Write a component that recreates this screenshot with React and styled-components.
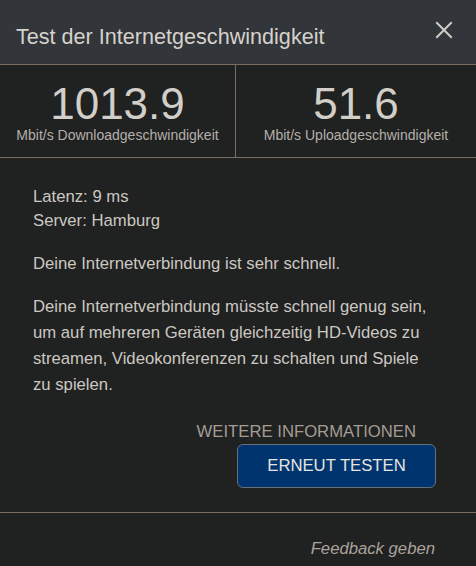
import React from 'react';
import styled, { createGlobalStyle } from 'styled-components';

const GlobalStyle = createGlobalStyle`
  html, body {
    margin: 0;
    padding: 0;
    background: #202121;
  }
  body {
    font-family: "Liberation Sans", Arial, sans-serif;
  }
`;

const Dialog = styled.div`
  width: 476px;
  height: 566px;
  background: #202121;
  color: #ccc8c2;
  display: flex;
  flex-direction: column;
  overflow: hidden;
`;

const Header = styled.div`
  height: 65px;
  flex-shrink: 0;
  background: #323539;
  border-bottom: 1px solid #7a6e62;
  display: flex;
  align-items: center;
  justify-content: space-between;
  padding: 9px 20px 0 16px;
  box-sizing: border-box;
`;

const Title = styled.h1`
  margin: 0;
  font-size: 21.6px;
  font-weight: normal;
  color: #d6d2cc;
`;

const CloseButton = styled.button`
  background: none;
  border: none;
  padding: 0;
  width: 24px;
  height: 24px;
  margin-top: -14px;
  cursor: pointer;
  display: flex;
  align-items: center;
  justify-content: center;
`;

const Stats = styled.div`
  display: grid;
  grid-template-columns: 236px 1fr;
  height: 92px;
  flex-shrink: 0;
  border-bottom: 1px solid #7a6e62;
`;

const Stat = styled.div`
  display: flex;
  flex-direction: column;
  align-items: center;
  padding-top: 18px;
  border-right: ${p => (p.divider ? '1px solid #7a6e62' : 'none')};
`;

const StatValue = styled.div`
  font-size: 44px;
  line-height: 42px;
  color: #d2cec8;
`;

const StatLabel = styled.div`
  font-size: 14px;
  line-height: 16px;
  margin-top: 2px;
  color: #b4b0aa;
`;

const Body = styled.div`
  padding: 27px 40px 0 33px;
  font-size: 16.7px;
  line-height: 24px;
  height: 355px;
  flex-shrink: 0;
  box-sizing: border-box;
  border-bottom: 1px solid #7a6e62;
  display: flex;
  flex-direction: column;
`;

const Line = styled.p`
  margin: 0;
  line-height: ${p => p.lh || '24px'};
  margin-top: ${p => p.gap || '0'};
`;

const Actions = styled.div`
  display: flex;
  flex-direction: column;
  align-items: flex-end;
  margin-top: 24px;
  margin-right: 0;
`;

const MoreLink = styled.a`
  font-size: 16.7px;
  line-height: 20px;
  color: #a49d95;
  text-decoration: none;
  margin-right: 20px;
`;

const RetryButton = styled.button`
  margin-top: 2px;
  width: 199px;
  height: 44px;
  background: #00346e;
  border: 1px solid #66707a;
  border-radius: 6px;
  color: #e6e4e0;
  font-family: "Liberation Sans", Arial, sans-serif;
  font-size: 16.7px;
  cursor: pointer;
`;

const Footer = styled.div`
  display: flex;
  justify-content: flex-end;
  padding: 26px 41px 0 0;
`;

const FeedbackLink = styled.a`
  font-size: 16.7px;
  font-style: italic;
  color: #aaa39b;
  text-decoration: none;
`;

const CloseIcon = () => (
  <svg width="18" height="18" viewBox="0 0 18 18">
    <path d="M2 2 L16 16 M16 2 L2 16" stroke="#d0ccc6" strokeWidth="2" strokeLinecap="square" />
  </svg>
);

export default function App() {
  return (
    <>
      <GlobalStyle />
      <Dialog>
        <Header>
          <Title>Test der Internetgeschwindigkeit</Title>
          <CloseButton aria-label="Schließen">
            <CloseIcon />
          </CloseButton>
        </Header>
        <Stats>
          <Stat divider>
            <StatValue>1013.9</StatValue>
            <StatLabel>Mbit/s Downloadgeschwindigkeit</StatLabel>
          </Stat>
          <Stat>
            <StatValue>51.6</StatValue>
            <StatLabel>Mbit/s Uploadgeschwindigkeit</StatLabel>
          </Stat>
        </Stats>
        <Body>
          <Line>Latenz: 9 ms</Line>
          <Line>Server: Hamburg</Line>
          <Line gap="19px">Deine Internetverbindung ist sehr schnell.</Line>
          <Line gap="18px" lh="26px">
            Deine Internetverbindung müsste schnell genug sein, um auf mehreren Geräten gleichzeitig
            HD-Videos zu streamen, Videokonferenzen zu schalten und Spiele zu spielen.
          </Line>
          <Actions>
            <MoreLink href="#">WEITERE INFORMATIONEN</MoreLink>
            <RetryButton>ERNEUT TESTEN</RetryButton>
          </Actions>
        </Body>
        <Footer>
          <FeedbackLink href="#">Feedback geben</FeedbackLink>
        </Footer>
      </Dialog>
    </>
  );
}
